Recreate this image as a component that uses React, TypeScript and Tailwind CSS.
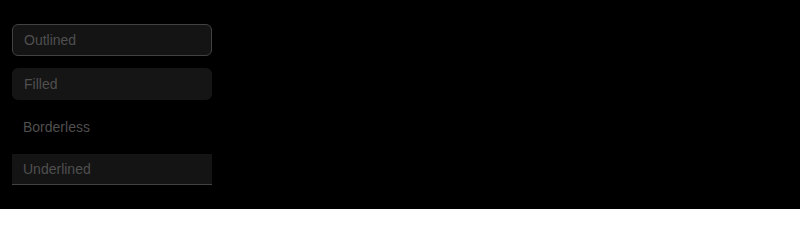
const base =
  "block w-full px-[11px] text-[14px] leading-[22px] text-[#d9d9d9] placeholder:text-[#4f4f4f] outline-none font-['Liberation_Sans',Arial,sans-serif]";

export default function App() {
  return (
    <div className="min-h-[209px] w-full bg-black pl-3 pt-6">
      <div className="flex w-[200px] flex-col gap-3">
        <input
          placeholder="Outlined"
          className={`${base} h-8 rounded-md border border-[#424242] bg-[#141414]`}
        />
        <input
          placeholder="Filled"
          className={`${base} h-8 rounded-md border border-transparent bg-[#151515]`}
        />
        <input
          placeholder="Borderless"
          className={`${base} h-[30px] border-0 bg-transparent`}
        />
        <input
          placeholder="Underlined"
          className={`${base} h-[31px] border-0 border-b border-[#424242] bg-[#141414]`}
        />
      </div>
    </div>
  );
}
